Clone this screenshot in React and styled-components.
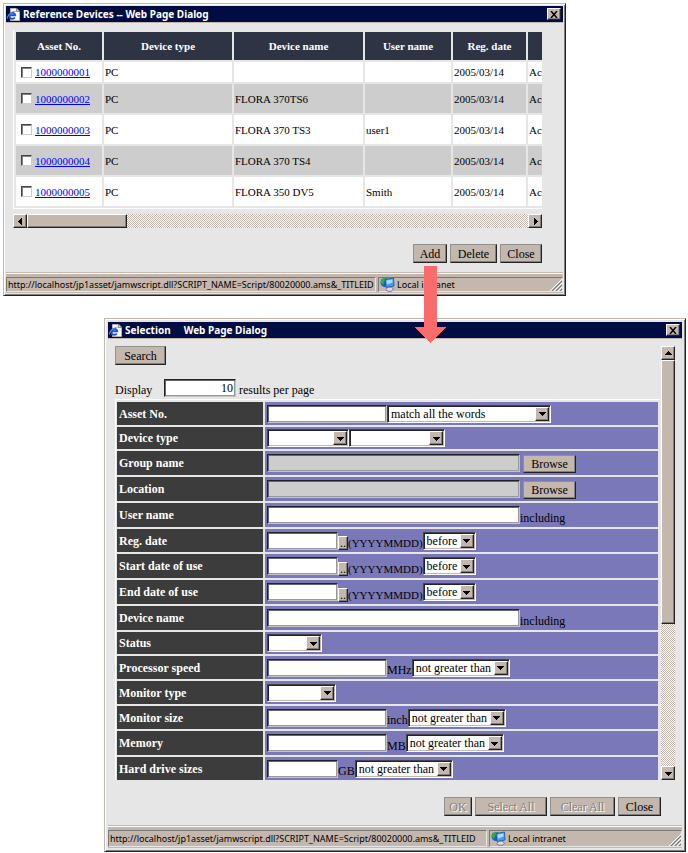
import React, { useState } from 'react'
import styled, { createGlobalStyle, css } from 'styled-components';

const GlobalStyle = createGlobalStyle`
    body {
        margin: 0;
        background-color: white;
        color: black;
        font-family: "Liberation Serif", serif;
        font-size: 12px;
        line-height: 14px;
    }

    * {
        box-sizing: border-box;
    }

    button, input, select {
        font: inherit;
        color: inherit;
        border-radius: 0;
        margin: 0;
        padding: 0;
    }
`

const raised = css`
    background-color: #c4b7ae;
    border: 1px solid;
    border-color: white #222 #222 white;
    box-shadow: inset -1px -1px 0 #808080;
`

const dither = css`
    background: repeating-conic-gradient(#c4b7ae 0% 25%, white 0% 50%) 0 0 / 2px 2px;
`

const Page = styled.main`
    display: flex;
    flex-direction: column;
    gap: 22px;
    padding: 3px 2px 1px 3px;
`

const Dialog = styled.section`
    margin-left: ${props => props.$left || 0}px;
    margin-right: ${props => props.$right || 0}px;
    background-color: #e6e6e6;
    border: 1px solid;
    border-color: #c4b7ae #222 #222 #c4b7ae;
    box-shadow: inset 1px 1px 0 white, inset -1px -1px 0 #808080;
    padding: ${props => props.$frame || 2}px;
`

const TitleBar = styled.header`
    display: flex;
    align-items: center;
    gap: 2px;
    height: 17px;
    padding: 0 2px 0 1px;
    background-color: #000c42;
    border-bottom: 1px solid #c4b7ae;
    color: white;

    h1 {
        flex: 1;
        margin: 0;
        font: bold 10px/16px "Noto Sans", sans-serif;
        white-space: pre;
    }

    button {
        ${raised}
        display: grid;
        place-items: center;
        width: 14px;
        height: 12px;
        color: black;
    }
`

const TableBody = styled.div`
    padding: 7px 21px 10px 7px;
`

const TableScroll = styled.div`
    overflow: hidden;
    border-left: 1px solid white;
    border-bottom: 1px solid white;
`

const DeviceTable = styled.table`
    table-layout: fixed;
    width: 638px;
    border-spacing: 2px;
    font-size: 11px;

    th {
        height: 28px;
        padding: 0;
        background-color: #2f3445;
        color: white;
    }

    td {
        height: 29px;
        padding: 0 1px;
        background-color: white;
    }

    tr:nth-child(even) td {
        background-color: #cdcdcd;
    }

    tbody tr:first-child td {
        height: 20px;
    }

    a {
        color: #0000ff;
    }
`

const AssetCell = styled.div`
    display: flex;
    align-items: center;
    gap: 3px;
    padding-left: 4px;
`

const Check = styled.input`
    appearance: none;
    width: 11px;
    height: 11px;
    background-color: white;
    border: 1px solid;
    border-color: #444 #d4cbc4 #d4cbc4 #444;
    box-shadow: inset 1px 1px 0 #808080;
`

const HScroll = styled.div`
    ${dither}
    display: flex;
    height: 14px;
    margin-top: 5px;
`

const VScroll = styled.div`
    ${dither}
    display: flex;
    flex-direction: column;
    width: 14px;
`

const ScrollButton = styled.button`
    ${raised}
    display: grid;
    place-items: center;
    flex: none;
    width: 14px;
    height: 14px;
`

const HThumb = styled.div`
    ${raised}
    width: 100px;
`

const VThumb = styled.div`
    ${raised}
    height: 264px;
    margin-bottom: auto;
`

const ButtonRow = styled.div`
    display: flex;
    justify-content: flex-end;
    gap: 3px;
    margin-top: ${props => props.$top}px;
`

const Button = styled.button`
    ${raised}
    border-color: #909090 #222 #222 #909090;
    width: ${props => props.$width}px;
    height: ${props => props.$height || 19}px;
    text-align: center;
    white-space: nowrap;

    &:disabled {
        color: #808080;
        text-shadow: 1px 1px 0 white;
    }
`

const ArrowAnchor = styled.div`
    position: relative;

    svg {
        position: absolute;
        z-index: 1;
        top: 22px;
        left: 0;
    }
`

const StatusBar = styled.footer`
    display: flex;
    gap: 2px;
    height: ${props => props.$height}px;
    padding: 3px 0 1px;
    background-color: #c4b7ae;
    border-top: 1px solid white;
    box-shadow: 0 -1px 0 #c4b7ae;
    font-family: "Noto Sans", sans-serif;
    font-size: 9px;
`

const StatusPanel = styled.div`
    display: flex;
    align-items: center;
    gap: 2px;
    flex: ${props => props.$width ? `0 0 ${props.$width}px` : '1 1 0'};
    min-width: 0;
    padding-left: 1px;
    border: 1px solid;
    border-color: #777 #e6e6e6 #e6e6e6 #777;
    white-space: nowrap;

    svg:last-child {
        margin-left: auto;
        align-self: flex-end;
    }
`

const SearchBody = styled.div`
    padding: 7px 7px 10px;
`

const SearchPane = styled.div`
    display: flex;
    gap: 1px;
`

const SearchForm = styled.form`
    flex: 1;
    min-width: 0;
`

const DisplayRow = styled.div`
    display: flex;
    align-items: flex-end;
    gap: 3px;
    margin: 14px 0 2px;

    label {
        width: 46px;
    }
`

const Fields = styled.div`
    display: grid;
    gap: 2px;
    padding: 2px 2px 0 1px;
    border: solid white;
    border-width: 1px 0 0 1px;
`

const Field = styled.div`
    display: grid;
    grid-template-columns: 146px 1fr;
    gap: 2px;
    height: ${props => props.$height}px;
`

const FieldLabel = styled.label`
    display: flex;
    align-items: center;
    padding-left: 2px;
    background-color: #3c3c3c;
    color: white;
    font-weight: bold;
`

const FieldValue = styled.div`
    display: flex;
    align-items: center;
    padding-left: 2px;
    background-color: #7a78b8;
    white-space: nowrap;
`

const Unit = styled.span`
    align-self: flex-end;
    padding-bottom: 2px;
    font-size: ${props => props.$small ? 11 : 12}px;
`

const TextBox = styled.input`
    width: ${props => props.$width}px;
    height: 18px;
    padding: 0 2px;
    background-color: white;
    border: 1px solid;
    border-color: #222 #c4c4c4 #c4c4c4 #222;
    box-shadow: inset 1px 1px 0 #666, inset -1px -1px 0 #999;
    text-align: ${props => props.$align || 'left'};

    &:read-only {
        background-color: #cdcdcd;
    }
`

const PickButton = styled.button`
    ${raised}
    align-self: flex-end;
    width: 10px;
    height: 14px;
    margin-bottom: 2px;
    line-height: 10px;
`

const BrowseButton = styled(Button)`
    align-self: flex-end;
    margin: 0 0 2px 3px;
`

const SelectBox = styled.span`
    position: relative;
    width: ${props => props.$width}px;
    height: 18px;

    select {
        appearance: none;
        width: 100%;
        height: 18px;
        padding: 0 16px 0 3px;
        background-color: white;
        border: 1px solid;
        border-color: #444 white white #444;
        box-shadow: inset 1px 1px 0 #222, inset -1px -1px 0 #c4b7ae;
        outline: none;
    }

    span {
        ${raised}
        position: absolute;
        top: 2px;
        right: 2px;
        display: grid;
        place-items: center;
        width: 14px;
        height: 14px;
        pointer-events: none;
    }
`

const turns = { down: 0, left: 90, up: 180, right: 270 }

function Triangle({ dir }) {
    return (
        <svg width="7" height="7" viewBox="0 0 7 7" shapeRendering="crispEdges" aria-hidden="true">
            <path d="M0 2h7L3.5 6z" transform={`rotate(${turns[dir]} 3.5 3.5)`} />
        </svg>
    );
}

function PageIcon() {
    return (
        <svg width="14" height="15" viewBox="0 0 14 15" aria-hidden="true">
            <path d="M3.5 1.500h6l3 3v9h-9z" fill="#fff" stroke="#b5b5b5" />
            <path d="M9.500 1v3.500H13z" fill="#d8d8b8" stroke="#666" strokeWidth="0.7" />
            <path d="M7.800 10.400A3 3 0 1 1 8.200 8.200H3" fill="none" stroke="#1d55cf" strokeWidth="1.9" />
            <path d="M0.500 11.500C0 8.500 4.500 4 8.800 4.200" fill="none" stroke="#69a8f5" strokeWidth="1" />
        </svg>
    );
}

function IntranetIcon() {
    return (
        <svg width="15" height="15" viewBox="0 0 15 15" aria-hidden="true">
            <circle cx="5" cy="5.500" r="4.500" fill="#1762c4" />
            <path d="M1 4l2-3 3 0-1 3-1 1-1 3-2-2z" fill="#35ad45" />
            <path d="M5 2.500l8.500-1.500.5 8-8 1.500z" fill="#3f9fee" stroke="#1c4f9c" strokeWidth="0.8" />
            <path d="M6.500 3.500L12.500 2.500v3L7 7.500z" fill="#a5e0ff" />
            <path d="M7.500 10.500l4-.5 2 2.500-2.500 2-4-.5-1-1.500z" fill="#d9d9e4" stroke="#65658a" strokeWidth="0.8" />
        </svg>
    );
}

function Grip() {
    return (
        <svg width="12" height="12" viewBox="0 0 12 12" aria-hidden="true">
            <path d="M0 12L12 0M4 12l8-8M8 12l4-4" stroke="white" />
            <path d="M2 12L12 2M6 12l6-6M10 12l2-2" stroke="#777" />
        </svg>
    );
}

function Title({ children }) {
    return (
        <TitleBar>
            <PageIcon />
            <h1>{children}</h1>
            <button type="button" aria-label="Close window">
                <svg width="8" height="7" viewBox="0 0 8 7" aria-hidden="true">
                    <path d="M1 0l6 7M7 0L1 7" stroke="black" strokeWidth="1.5" />
                </svg>
            </button>
        </TitleBar>
    );
}

function Status({ width, height }) {
    return (
        <StatusBar $height={height}>
            <StatusPanel $width={width}>
                http://localhost/jp1asset/jamwscript.dll?SCRIPT_NAME=Script/80020000.ams&amp;_TITLEID
            </StatusPanel>
            <StatusPanel>
                <IntranetIcon />
                <span>Local intranet</span>
                <Grip />
            </StatusPanel>
        </StatusBar>
    );
}

function Select({ id, label, width, text }) {
    return (
        <SelectBox $width={width}>
            <select id={id} aria-label={label}>
                <option>{text}</option>
            </select>
            <span><Triangle dir="down" /></span>
        </SelectBox>
    );
}

const columns = [
    { name: 'Asset No.', width: 86 },
    { name: 'Device type', width: 128 },
    { name: 'Device name', width: 129 },
    { name: 'User name', width: 86 },
    { name: 'Reg. date', width: 73 },
    { name: '', width: 122 },
]

const devices = [
    { id: '1000000001', name: '', user: '' },
    { id: '1000000002', name: 'FLORA 370TS6', user: '' },
    { id: '1000000003', name: 'FLORA 370 TS3', user: 'user1' },
    { id: '1000000004', name: 'FLORA 370 TS4', user: '' },
    { id: '1000000005', name: 'FLORA 350 DV5', user: 'Smith' },
]

const fields = [
    { name: 'Asset No.', height: 23, box: 120, select: 'match all the words', selectWidth: 164 },
    { name: 'Device type', height: 22, kind: 'types' },
    { name: 'Group name', height: 24, box: 253, kind: 'browse' },
    { name: 'Location', height: 24, box: 253, kind: 'browse' },
    { name: 'User name', height: 24, box: 253, unit: 'including' },
    { name: 'Reg. date', height: 23, box: 71, kind: 'date' },
    { name: 'Start date of use', height: 24, box: 71, kind: 'date' },
    { name: 'End date of use', height: 24, box: 71, kind: 'date' },
    { name: 'Device name', height: 24, box: 253, unit: 'including' },
    { name: 'Status', height: 22, kind: 'select', selectWidth: 55 },
    { name: 'Processor speed', height: 23, box: 120, unit: 'MHz', select: 'not greater than', selectWidth: 98 },
    { name: 'Monitor type', height: 23, kind: 'select', selectWidth: 69 },
    { name: 'Monitor size', height: 23, box: 120, unit: 'inch', select: 'not greater than', selectWidth: 98 },
    { name: 'Memory', height: 24, box: 120, unit: 'MB', select: 'not greater than', selectWidth: 98 },
    { name: 'Hard drive sizes', height: 23, box: 71, unit: 'GB', select: 'not greater than', selectWidth: 98 },
]

function FieldRow({ field, id }) {
    const { name, kind, box, unit, select, selectWidth } = field;

    return (
        <Field $height={field.height}>
            <FieldLabel htmlFor={id}>{name}</FieldLabel>
            <FieldValue>
                {kind === 'types' && <Select id={id} width={82} text="" />}
                {kind === 'types' && <Select label="Device subtype" width={96} text="" />}
                {kind === 'select' && <Select id={id} width={selectWidth} text="" />}
                {box && <TextBox id={id} type="text" $width={box} readOnly={kind === 'browse'} />}
                {kind === 'browse' && <BrowseButton type="button" $width={53} $height={18}>Browse</BrowseButton>}
                {kind === 'date' && <PickButton type="button">..</PickButton>}
                {kind === 'date' && <Unit $small>(YYYYMMDD)</Unit>}
                {kind === 'date' && <Select label={name + ' condition'} width={53} text="before" />}
                {unit && <Unit>{unit}</Unit>}
                {select && <Select label={name + ' condition'} width={selectWidth} text={select} />}
            </FieldValue>
        </Field>
    );
}

function ReferenceDevices() {
    return (
        <Dialog $right={120}>
            <Title>Reference Devices -- Web Page Dialog</Title>
            <TableBody>
                <TableScroll>
                    <DeviceTable>
                        <colgroup>
                            {columns.map(col => <Col key={col.name} $width={col.width} />)}
                        </colgroup>
                        <thead>
                            <tr>{columns.map(col => <th key={col.name}>{col.name}</th>)}</tr>
                        </thead>
                        <tbody>
                            {devices.map(item => (
                                <tr key={item.id}>
                                    <td>
                                        <AssetCell>
                                            <Check type="checkbox" aria-label={item.id} />
                                            <a href={'#' + item.id}>{item.id}</a>
                                        </AssetCell>
                                    </td>
                                    <td>PC</td>
                                    <td>{item.name}</td>
                                    <td>{item.user}</td>
                                    <td>2005/03/14</td>
                                    <td>Ac</td>
                                </tr>
                            ))}
                        </tbody>
                    </DeviceTable>
                </TableScroll>
                <HScroll>
                    <ScrollButton type="button" aria-label="Scroll left"><Triangle dir="left" /></ScrollButton>
                    <HThumb />
                    <Spacer />
                    <ScrollButton type="button" aria-label="Scroll right"><Triangle dir="right" /></ScrollButton>
                </HScroll>
                <ButtonRow $top={16}>
                    <ArrowAnchor>
                        <Button type="button" $width={34}>Add</Button>
                        <svg width="34" height="77" viewBox="0 0 34 77" shapeRendering="crispEdges" aria-hidden="true">
                            <path d="M11 0h13v61h10L17.500 77 1 61h10z" fill="#fa6c6c" />
                        </svg>
                    </ArrowAnchor>
                    <Button type="button" $width={47}>Delete</Button>
                    <Button type="button" $width={42}>Close</Button>
                </ButtonRow>
            </TableBody>
            <Status width={370} height={20} />
        </Dialog>
    );
}

const Col = styled.col`
    width: ${props => props.$width}px;
`

const Spacer = styled.div`
    flex: 1;
`

function Selection() {
    const [results, setResults] = useState('10');

    return (
        <Dialog $left={101} $frame={3}>
            <Title>{'Selection     Web Page Dialog'}</Title>
            <SearchBody>
                <SearchPane>
                    <SearchForm>
                        <Button type="button" $width={51}>Search</Button>
                        <DisplayRow>
                            <label htmlFor="results">Display</label>
                            <TextBox id="results" type="text" $width={72} $align="right" value={results} onChange={e => setResults(e.target.value)} />
                            <span>results per page</span>
                        </DisplayRow>
                        <Fields>
                            {fields.map((field, i) => <FieldRow key={field.name} field={field} id={'field' + i} />)}
                        </Fields>
                    </SearchForm>
                    <VScroll>
                        <ScrollButton type="button" aria-label="Scroll up"><Triangle dir="up" /></ScrollButton>
                        <VThumb />
                        <ScrollButton type="button" aria-label="Scroll down"><Triangle dir="down" /></ScrollButton>
                    </VScroll>
                </SearchPane>
                <FooterRow $top={17}>
                    <Button type="button" $width={28} disabled>OK</Button>
                    <Button type="button" $width={72} disabled>Select All</Button>
                    <Button type="button" $width={65} disabled>Clear All</Button>
                    <Button type="button" $width={43}>Close</Button>
                </FooterRow>
            </SearchBody>
            <Status width={379} height={22} />
        </Dialog>
    );
}

const FooterRow = styled(ButtonRow)`
    padding-right: 14px;
`

function App() {
    return (
        <Page>
            <GlobalStyle />
            <ReferenceDevices />
            <Selection />
        </Page>
    );
}

export default App;
